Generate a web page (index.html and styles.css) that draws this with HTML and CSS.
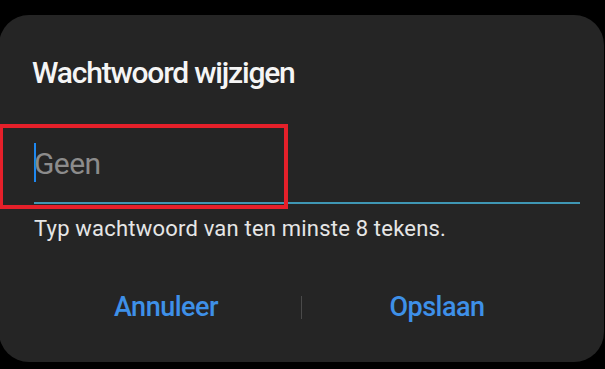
FILE: index.html
```html
<!DOCTYPE html>
<html lang="nl">
<head>
<meta charset="utf-8">
<title>Wachtwoord wijzigen</title>
<link rel="stylesheet" href="styles.css">
</head>
<body>
<div class="dialog">
  <h1 class="title">Wachtwoord wijzigen</h1>
  <div class="field">
    <span class="cursor"></span>
    <span class="placeholder">Geen</span>
  </div>
  <p class="helper">Typ wachtwoord van ten minste 8 tekens.</p>
  <div class="actions">
    <button class="btn">Annuleer</button>
    <span class="sep"></span>
    <button class="btn">Opslaan</button>
  </div>
  <div class="highlight"></div>
</div>
</body>
</html>
```

FILE: styles.css
```css
html, body {
  margin: 0;
  padding: 0;
  background: #000;
  width: 605px;
  height: 369px;
  overflow: hidden;
}
body {
  font-family: Roboto, "Noto Sans", sans-serif;
  padding-top: 15px;
}
.dialog {
  position: relative;
  box-sizing: border-box;
  width: 605px;
  height: 347px;
  margin-left: -1px;
  background: #252525;
  border-radius: 30px;
  padding: 38px 24px 0 35px;
  display: flex;
  flex-direction: column;
}
.title {
  margin: 0 0 0 -2px;
  font-size: 30px;
  font-weight: 500;
  color: #f5f5f5;
  line-height: 40px;
  letter-spacing: -1.2px;
}
.field {
  margin-top: 50px;
  height: 59px;
  border-bottom: 2px solid #3f97b4;
  display: flex;
  align-items: flex-start;
}
.cursor {
  width: 2px;
  height: 39px;
  background: #1e88f0;
}
.placeholder {
  font-size: 30px;
  color: #8c8c8c;
  line-height: 48px;
  letter-spacing: -0.6px;
  margin: -3px 0 0 -2px;
}
.helper {
  margin: 12px 0 0;
  font-size: 22px;
  color: #e6e6e6;
  line-height: 26px;
  letter-spacing: 0.2px;
}
.actions {
  margin: 49px -24px 0 -35px;
  padding: 0 32px;
  display: flex;
  align-items: center;
}
.btn {
  flex: 1;
  background: none;
  border: 0;
  padding: 0;
  font-family: inherit;
  font-size: 27px;
  font-weight: 500;
  color: #3e90e8;
  line-height: 32px;
  letter-spacing: -0.5px;
}
.sep {
  width: 1px;
  height: 23px;
  background: #4a4a4a;
}
.highlight {
  position: absolute;
  left: 0;
  top: 109px;
  width: 281px;
  height: 77px;
  border: 4px solid #e5202a;
}
```
